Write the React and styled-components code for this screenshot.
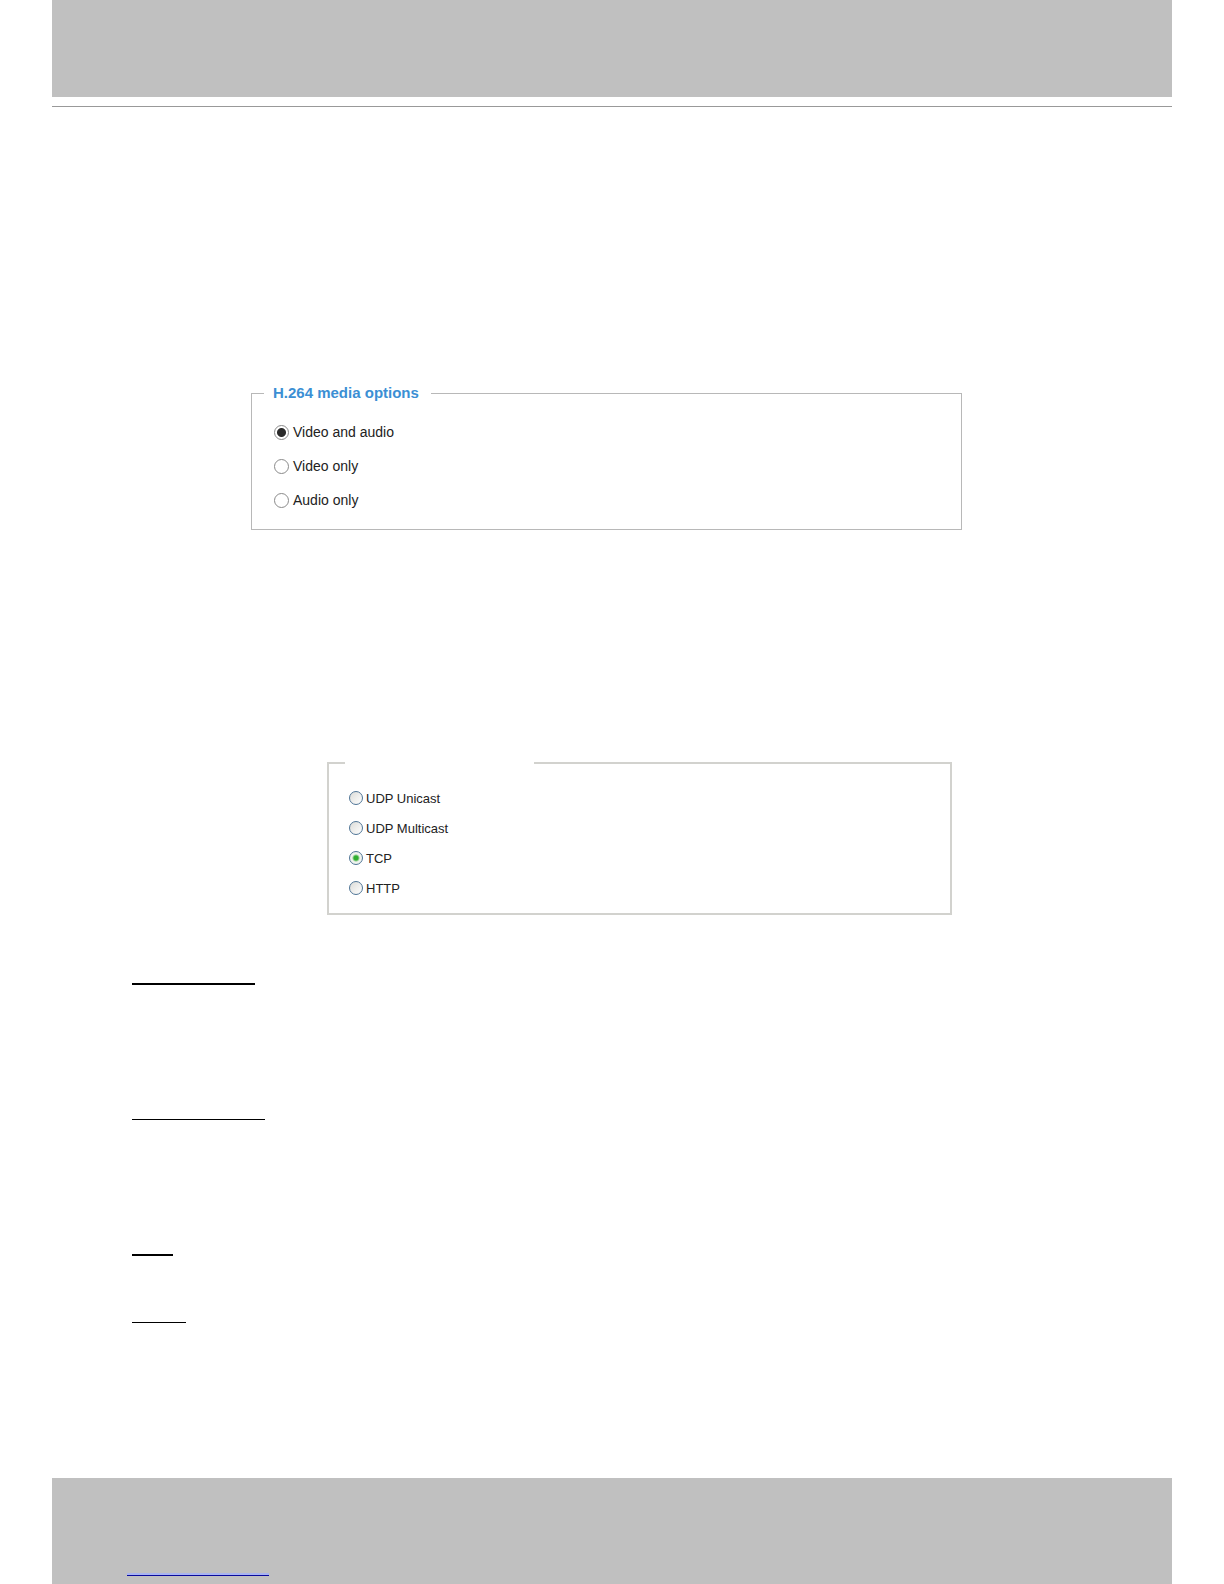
import React, { useState } from "react";
import styled, { createGlobalStyle } from "styled-components";

const GlobalStyle = createGlobalStyle`
  * {
    box-sizing: border-box;
  }
  body {
    margin: 0;
    background: #fff;
    font-family: "Liberation Sans", Arial, sans-serif;
  }
`;

const Page = styled.div`
  min-height: 100vh;
  padding: 0 52px;
  display: flex;
  flex-direction: column;
`;

const Header = styled.header`
  height: 107px;
  border-bottom: 1px solid #999;
  &::before {
    content: "";
    display: block;
    height: 97px;
    background: #c0c0c0;
  }
`;

const Main = styled.main`
  flex: 1;
  display: flex;
  flex-direction: column;
  padding: 276px 0 154px 80px;
`;

const MediaGroup = styled.fieldset`
  margin: 0 210px 0 119px;
  padding: 12px;
  border: 1px solid #b8b8b8;
`;

const MediaLegend = styled.legend`
  padding: 0 12px 0 9px;
  font-size: 15px;
  font-weight: bold;
  line-height: 20px;
  color: #3b8fd4;
`;

const ProtocolGroup = styled.fieldset`
  margin: 223px 220px 0 195px;
  padding: 10px 16px;
  border: 2px solid #d2d2ce;
`;

const ProtocolLegend = styled.legend`
  width: 189px;
  height: 20px;
  padding: 0;
`;

const Option = styled.label`
  display: flex;
  align-items: center;
  gap: ${({ $small }) => ($small ? "3px" : "4px")};
  height: ${({ $small }) => ($small ? "30px" : "34px")};
  padding-left: ${({ $small }) => ($small ? "4px" : "10px")};
  font-size: ${({ $small }) => ($small ? "13px" : "14px")};
  color: #222;
`;

const Radio = styled.input`
  appearance: none;
  flex: none;
  width: 15px;
  height: 15px;
  margin: 0;
  border: 1px solid #8a8a8a;
  border-radius: 50%;
  background: #fff;
  &:checked {
    background: radial-gradient(circle, #2a2a2a 4px, #fff 5px);
  }
`;

const ClassicRadio = styled(Radio)`
  width: 14px;
  height: 14px;
  border-color: #4f7596;
  background: linear-gradient(135deg, #dcdcd8, #fff);
  &:checked {
    background: radial-gradient(circle, #2fae2f 2px, #f0f3ee 4px);
  }
`;

const Underlines = styled.div`
  margin-top: 68px;
  display: flex;
  flex-direction: column;
`;

const Underline = styled.hr`
  width: ${({ $width }) => $width}px;
  height: ${({ $bold }) => ($bold ? "2px" : "1px")};
  margin: 0 0 ${({ $space }) => $space}px;
  border: 0;
  background: #000;
`;

const Footer = styled.footer`
  height: 106px;
  padding: 0 75px 8px;
  display: flex;
  align-items: flex-end;
  background: #c0c0c0;
`;

const FooterLink = styled.a`
  width: 142px;
  height: 20px;
  border-bottom: 1px solid #0a0a9c;
  box-shadow: inset 0 -2px #a9b4f0;
`;

const mediaOptions = ["Video and audio", "Video only", "Audio only"];
const protocols = ["UDP Unicast", "UDP Multicast", "TCP", "HTTP"];
const underlines = [
  { width: 123, bold: true, space: 134 },
  { width: 133, bold: false, space: 134 },
  { width: 41, bold: true, space: 66 },
  { width: 54, bold: false, space: 0 },
];

function App() {
  const [media, setMedia] = useState("Video and audio");
  const [protocol, setProtocol] = useState("TCP");

  return (
    <>
      <GlobalStyle />
      <Page>
        <Header />
        <Main>
          <MediaGroup>
            <MediaLegend>H.264 media options</MediaLegend>
            {mediaOptions.map((item) => (
              <Option key={item}>
                <Radio
                  type="radio"
                  name="media"
                  checked={media === item}
                  onChange={() => setMedia(item)}
                />
                {item}
              </Option>
            ))}
          </MediaGroup>
          <ProtocolGroup aria-label="Protocol">
            <ProtocolLegend />
            {protocols.map((item) => (
              <Option key={item} $small>
                <ClassicRadio
                  type="radio"
                  name="protocol"
                  checked={protocol === item}
                  onChange={() => setProtocol(item)}
                />
                {item}
              </Option>
            ))}
          </ProtocolGroup>
          <Underlines>
            {underlines.map((line) => (
              <Underline
                key={line.width}
                $width={line.width}
                $bold={line.bold}
                $space={line.space}
              />
            ))}
          </Underlines>
        </Main>
        <Footer>
          <FooterLink href="#" aria-label="Website" />
        </Footer>
      </Page>
    </>
  );
}

export default App;
